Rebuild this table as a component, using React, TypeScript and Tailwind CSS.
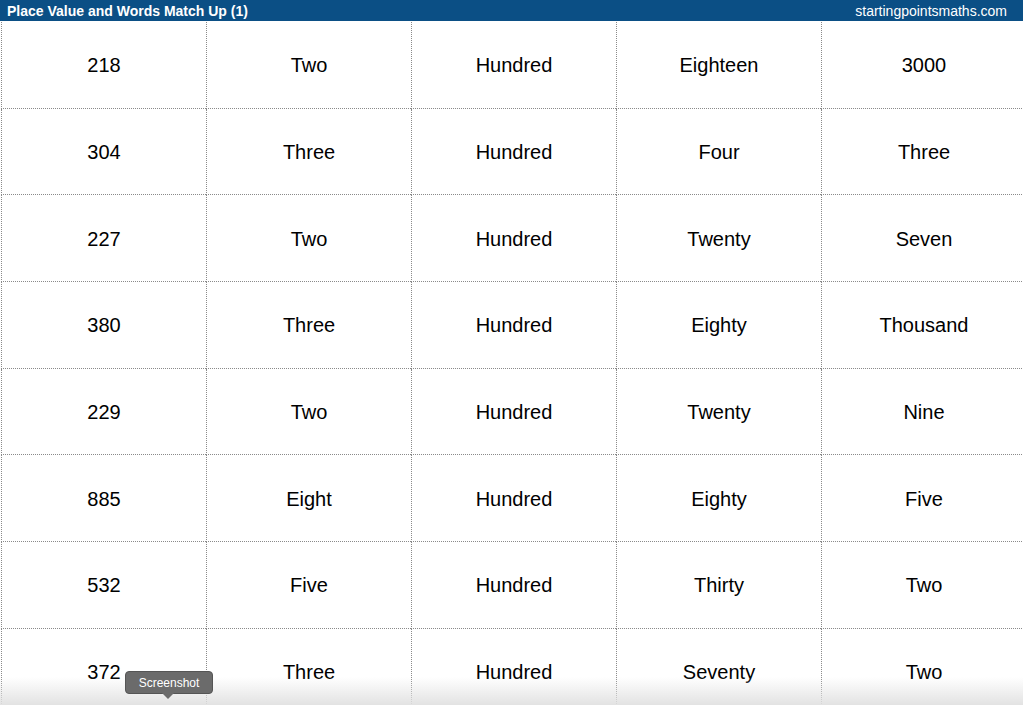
import React from "react";

const rows: string[][] = [
  ["218", "Two", "Hundred", "Eighteen", "3000"],
  ["304", "Three", "Hundred", "Four", "Three"],
  ["227", "Two", "Hundred", "Twenty", "Seven"],
  ["380", "Three", "Hundred", "Eighty", "Thousand"],
  ["229", "Two", "Hundred", "Twenty", "Nine"],
  ["885", "Eight", "Hundred", "Eighty", "Five"],
  ["532", "Five", "Hundred", "Thirty", "Two"],
  ["372", "Three", "Hundred", "Seventy", "Two"],
];

export default function App() {
  return (
    <div
      className="relative w-[1023px] h-[705px] overflow-hidden bg-white"
      style={{ fontFamily: '"Liberation Sans", Arial, Helvetica, sans-serif' }}
    >
      <div className="h-[21px] bg-[#0b4f85] flex items-center justify-between pl-[7px] pr-[16px] text-white text-[14px] leading-none">
        <span className="font-bold">Place Value and Words Match Up (1)</span>
        <span>startingpointsmaths.com</span>
      </div>
      <div className="ml-[1px] mt-[1px] w-[1030px] grid grid-cols-[205px_205px_205px_205px_205px]">
        {rows.map((r, i) =>
          r.map((c, j) => (
            <div
              key={`${i}-${j}`}
              className="h-[86.7px] pt-[1px] flex items-center justify-center border-l border-b border-dotted border-[#8a8a8a] text-[20px] text-black"
            >
              {c}
            </div>
          ))
        )}
      </div>
      <div className="absolute left-0 right-0 bottom-0 h-[28px] bg-gradient-to-b from-[rgba(255,255,255,0)] to-[rgba(225,225,225,0.95)] pointer-events-none" />
      <div className="absolute left-[125px] top-[671px] w-[88px] h-[23px] rounded-[4px] bg-[#6b6b6b] border border-[#555] text-white text-[12px] flex items-center justify-center">
        Screenshot
        <div className="absolute left-[36px] bottom-[-6px] w-0 h-0 border-l-[6px] border-r-[6px] border-t-[6px] border-l-transparent border-r-transparent border-t-[#6b6b6b]" />
      </div>
    </div>
  );
}
